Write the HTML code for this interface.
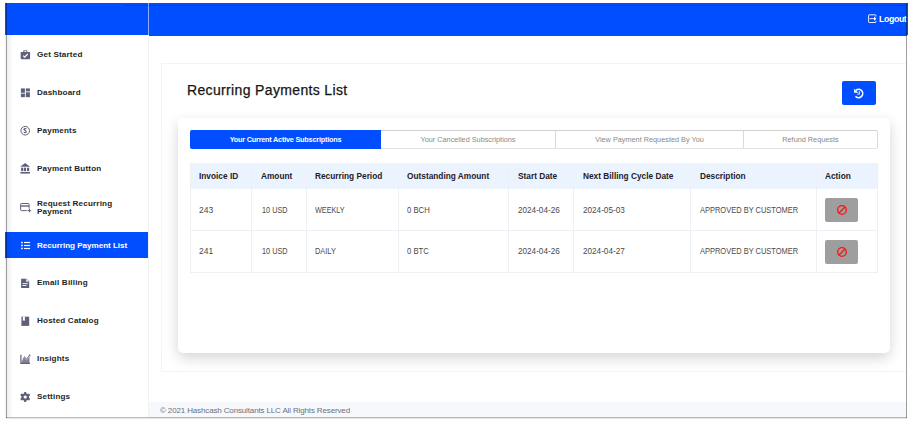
<!DOCTYPE html>
<html><head><meta charset="utf-8">
<style>
*{box-sizing:border-box;margin:0;padding:0}
html,body{width:912px;height:424px;overflow:hidden;background:#fff}
body{position:relative;font-family:"Liberation Sans",sans-serif;color:#212529}
.a{position:absolute}
.hdr{left:5px;top:3px;width:903px;height:32px;background:#004eff}
.side{left:5px;top:35px;width:144px;height:382px;background:#fff;border-right:1px solid #f1f2f4}
.foot{left:149px;top:402px;width:758px;height:16px;background:#f7f8fb}
.foot span{position:absolute;left:11px;top:3.5px;font-size:8px;letter-spacing:-0.14px;color:#6c6f80;white-space:nowrap}
.nav{left:5px;width:143px;height:26px}
.nav .ic{position:absolute;left:15px;top:8px;width:11px;height:11px}
.nav .t{position:absolute;left:32px;top:0;font-weight:bold;font-size:8.1px;letter-spacing:0.17px;white-space:nowrap;color:#1e1f24}
.panel{left:161px;top:63px;width:745px;height:309px;border:1px solid #f3f4f8;border-right:0;background:#fff}
.title{left:187px;top:81.5px;-webkit-text-stroke:0.25px #151515;font-size:14px;letter-spacing:0.35px;color:#151515;white-space:nowrap}
.rbtn{left:842px;top:81px;width:34px;height:24px;background:#004eff;border-radius:2px}
.card{left:178px;top:118px;width:712px;height:235px;background:#fff;border-radius:5px;box-shadow:0 5px 14px rgba(0,0,0,.17)}
.tabs{left:190px;top:130px;width:688px;height:19px;border:1px solid #dadada;border-top-color:#d0d0d0;border-bottom-color:#e2e2e2;border-radius:2px}
.tab{position:absolute;top:0;height:17px;font-size:7.3px;color:#8a8a8a;white-space:nowrap;line-height:17px;text-align:center}
.tbl{left:190px;top:163px;width:688px;height:110px;border:1px solid #eef0f5;border-top:0}
.th{position:absolute;top:0;height:26px;background:#ebf3fe}
.cell{position:absolute;font-size:8.5px;color:#4a4a4a;white-space:nowrap}
.hcell{position:absolute;font-size:8.3px;font-weight:bold;color:#1f2128;white-space:nowrap}
.vl{position:absolute;top:163px;width:1px;height:110px;background:#eef0f5}
.hl{position:absolute;left:190px;width:688px;height:1px;background:#eef0f5}
.ban{position:absolute;width:33px;height:24px;background:#9e9e9e;border-radius:2px}
.frame{pointer-events:none}
</style></head><body>
<div class="a hdr"></div>
<div class="a" style="left:148px;top:3px;width:1px;height:32px;background:rgba(255,255,255,.55)"></div>
<div class="a side"></div>
<div class="a" style="left:149px;top:35px;width:758px;height:1px;background:#004eff"></div>
<div class="a foot"><span>© 2021 Hashcash Consultants LLC All Rights Reserved</span></div>

<!-- nav -->
<div class="a nav" style="top:41px"><div class="t" style="top:9px">Get Started</div></div>
<div class="a nav" style="top:79px"><div class="t" style="top:9px">Dashboard</div></div>
<div class="a nav" style="top:117px"><div class="t" style="top:9px">Payments</div></div>
<div class="a nav" style="top:155px"><div class="t" style="top:9px">Payment Button</div></div>
<div class="a nav" style="top:193px"><div class="t" style="top:6.6px;line-height:8px">Request Recurring<br>Payment</div></div>
<div class="a nav" style="top:232px;background:#004eff"><div class="t" style="top:8.5px;color:#fff;letter-spacing:-0.03px">Recurring Payment List</div></div>
<div class="a nav" style="top:269px"><div class="t" style="top:9px">Email Billing</div></div>
<div class="a nav" style="top:307px"><div class="t" style="top:9px">Hosted Catalog</div></div>
<div class="a nav" style="top:345px"><div class="t" style="top:9px">Insights</div></div>
<div class="a nav" style="top:383px"><div class="t" style="top:9px">Settings</div></div>

<!-- main -->
<div class="a panel"></div>
<div class="a title">Recurring Payments List</div>
<div class="a rbtn"></div>
<div class="a card"></div>
<div class="a tabs">
  <div class="tab" style="left:-1px;top:-1px;width:191px;height:19px;line-height:19px;background:#004eff;color:#fff;font-weight:bold;letter-spacing:-0.22px;border-radius:2px 0 0 2px">Your Current Active Subscriptions</div>
  <div class="tab" style="left:190px;width:175px;border-right:1px solid #dadada">Your Cancelled Subscriptions</div>
  <div class="tab" style="left:365px;width:188px;border-right:1px solid #dadada">View Payment Requested By You</div>
  <div class="tab" style="left:553px;width:133px">Refund Requests</div>
</div>

<div class="a th" style="left:190px;top:163px;width:688px"></div>
<div class="a tbl"></div>
<div class="vl" style="left:251px"></div>
<div class="vl" style="left:306px"></div>
<div class="vl" style="left:398px"></div>
<div class="vl" style="left:508px"></div>
<div class="vl" style="left:573px"></div>
<div class="vl" style="left:690px"></div>
<div class="vl" style="left:816px"></div>
<div class="hl" style="top:230px"></div>

<div class="hcell" style="left:199px;top:171px">Invoice ID</div>
<div class="hcell" style="left:261px;top:171px">Amount</div>
<div class="hcell" style="left:315px;top:171px">Recurring Period</div>
<div class="hcell" style="left:407px;top:171px">Outstanding Amount</div>
<div class="hcell" style="left:518px;top:171px">Start Date</div>
<div class="hcell" style="left:583px;top:171px">Next Billing Cycle Date</div>
<div class="hcell" style="left:700px;top:171px">Description</div>
<div class="hcell" style="left:825px;top:171px">Action</div>

<div class="cell" style="left:199px;top:205px">243</div>
<div class="cell" style="left:262px;top:205px;transform:scaleX(0.86);transform-origin:0 0">10 USD</div>
<div class="cell" style="left:315px;top:205px;transform:scaleX(0.85);transform-origin:0 0">WEEKLY</div>
<div class="cell" style="left:407px;top:205px;transform:scaleX(0.91);transform-origin:0 0">0 BCH</div>
<div class="cell" style="left:518px;top:205px;transform:scaleX(0.96);transform-origin:0 0">2024-04-26</div>
<div class="cell" style="left:583px;top:205px;transform:scaleX(0.96);transform-origin:0 0">2024-05-03</div>
<div class="cell" style="left:700px;top:205px;transform:scaleX(0.88);transform-origin:0 0">APPROVED BY CUSTOMER</div>
<div class="ban" style="left:825px;top:198px"></div>

<div class="cell" style="left:199px;top:246px">241</div>
<div class="cell" style="left:262px;top:246px;transform:scaleX(0.86);transform-origin:0 0">10 USD</div>
<div class="cell" style="left:315px;top:246px;transform:scaleX(0.87);transform-origin:0 0">DAILY</div>
<div class="cell" style="left:407px;top:246px;transform:scaleX(0.91);transform-origin:0 0">0 BTC</div>
<div class="cell" style="left:518px;top:246px;transform:scaleX(0.96);transform-origin:0 0">2024-04-26</div>
<div class="cell" style="left:583px;top:246px;transform:scaleX(0.96);transform-origin:0 0">2024-04-27</div>
<div class="cell" style="left:700px;top:246px;transform:scaleX(0.88);transform-origin:0 0">APPROVED BY CUSTOMER</div>
<div class="ban" style="left:825px;top:240px"></div>

<!-- logout -->
<div class="a" style="left:879px;top:13.6px;font-size:8.8px;letter-spacing:-0.4px;font-weight:bold;color:#fff">Logout</div>


<!-- icons -->
<svg class="a" style="left:20px;top:49px" width="12" height="12" viewBox="0 0 12 12">
 <path d="M3.7 3.2V1.7H6.9V3.2" fill="none" stroke="#5f617c" stroke-width="0.9"/>
 <rect x="0.7" y="3" width="9.4" height="7.2" rx="0.6" fill="#5f617c"/>
 <path d="M3.2 6.7L4.6 8.1L7.7 5" fill="none" stroke="#fff" stroke-width="1.2"/>
</svg>
<svg class="a" style="left:20px;top:88px" width="12" height="12" viewBox="0 0 12 12">
 <rect x="0.9" y="0.4" width="4" height="4.4" fill="#5f617c"/>
 <rect x="0.9" y="5.6" width="4" height="3.6" fill="#5f617c"/>
 <rect x="5.8" y="0.4" width="4.1" height="3" fill="#5f617c"/>
 <rect x="5.8" y="4.3" width="4.1" height="4.9" fill="#5f617c"/>
</svg>
<svg class="a" style="left:20px;top:125px" width="12" height="12" viewBox="0 0 12 12">
 <circle cx="5.2" cy="5.7" r="4.3" fill="none" stroke="#5f617c" stroke-width="1"/>
 <path d="M6.3 4.1Q5.9 3.6 5.1 3.6Q4 3.6 4 4.5Q4 5.3 5.1 5.5Q6.3 5.8 6.3 6.7Q6.3 7.6 5.1 7.6Q4.2 7.6 3.9 7.1M5.1 2.9V3.6M5.1 7.6V8.3" fill="none" stroke="#5f617c" stroke-width="1.15"/>
</svg>
<svg class="a" style="left:20px;top:161px" width="12" height="14" viewBox="0 0 12 14">
 <path d="M0.2 5.7L5.1 2L10.1 5.7Z" fill="#5f617c"/>
 <rect x="1.1" y="6.7" width="2.2" height="3.3" fill="#5f617c"/>
 <rect x="4" y="6.7" width="2" height="3.3" fill="#5f617c"/>
 <rect x="7" y="6.7" width="2.2" height="3.3" fill="#5f617c"/>
 <rect x="0.4" y="10.9" width="9.5" height="1.7" fill="#5f617c"/>
</svg>
<svg class="a" style="left:20px;top:201px" width="13" height="13" viewBox="0 0 13 13">
 <path d="M6.8 9.6H1.4Q0.6 9.6 0.6 8.8V3.3Q0.6 2.5 1.4 2.5H8.3Q9.1 2.5 9.1 3.3V7.6" fill="none" stroke="#5f617c" stroke-width="1"/>
 <rect x="0.6" y="4.3" width="8.5" height="1.4" fill="#5f617c"/>
 <path d="M7.5 9.6H11.2M9.4 7.9V11.3" fill="none" stroke="#5f617c" stroke-width="1"/>
</svg>
<svg class="a" style="left:20px;top:240px" width="12" height="11" viewBox="0 0 12 11">
 <rect x="1.1" y="1.8" width="1.7" height="1.5" fill="#fff"/>
 <rect x="1.1" y="4.7" width="1.7" height="1.5" fill="#fff"/>
 <rect x="1.1" y="7.7" width="1.7" height="1.5" fill="#fff"/>
 <rect x="4" y="1.9" width="6.1" height="1.2" fill="#fff"/>
 <rect x="4" y="4.9" width="6.1" height="1.2" fill="#fff"/>
 <rect x="4" y="7.9" width="6.1" height="1.2" fill="#fff"/>
</svg>
<svg class="a" style="left:20px;top:277px" width="12" height="12" viewBox="0 0 12 12">
 <path d="M1.1 1.7H6.6L9.2 4.3V11.1H1.1Z" fill="#5f617c"/>
 <path d="M6.3 1.9V4.6H9" fill="#fff" stroke="#fff" stroke-width="0.3"/>
 <rect x="2.5" y="6.2" width="5.2" height="0.9" fill="#fff"/>
 <rect x="2.5" y="8.1" width="4" height="0.9" fill="#fff"/>
</svg>
<svg class="a" style="left:20px;top:315px" width="12" height="12" viewBox="0 0 12 12">
 <rect x="1.4" y="1.7" width="7.8" height="9.2" fill="#5f617c"/>
 <path d="M2.8 1.7H4.9V6.1L3.85 5.3L2.8 6.1Z" fill="#fff"/>
</svg>
<svg class="a" style="left:20px;top:353px" width="12" height="12" viewBox="0 0 12 12">
 <path d="M0.9 1.8V10.4H10" fill="none" stroke="#5f617c" stroke-width="1.2"/>
 <path d="M1.8 9.6L4.4 3.8L6.5 5.9L9.4 2.6V9.9H1.8Z" fill="#5f617c" opacity="0.5"/>
 <path d="M2.2 9.9L4.4 5.4L6.5 7.4L9.4 4.4V9.9Z" fill="#5f617c" opacity="0.6"/>
 <path d="M1.8 9.6L4.4 3.8L6.5 5.9L9.4 2.6" fill="none" stroke="#5f617c" stroke-width="0.8"/>
 <circle cx="9.6" cy="2.3" r="0.9" fill="#5f617c"/>
</svg>
<svg class="a" style="left:20px;top:391px" width="12" height="12" viewBox="-6 -6 12 12">
 <path d="M-0.9 -5.1H0.9L1.3 -3.6L2.5 -2.9L4 -3.4L4.9 -1.8L3.8 -0.7V0.7L4.9 1.8L4 3.4L2.5 2.9L1.3 3.6L0.9 5.1H-0.9L-1.3 3.6L-2.5 2.9L-4 3.4L-4.9 1.8L-3.8 0.7V-0.7L-4.9 -1.8L-4 -3.4L-2.5 -2.9L-1.3 -3.6Z" fill="#5f617c" transform="translate(-0.8 0)"/>
 <circle cx="-0.8" cy="0" r="1.6" fill="#fff"/>
</svg>
<!-- logout icon -->
<svg class="a" style="left:867.2px;top:12.8px" width="11" height="11" viewBox="0 0 11 11">
 <path d="M8.9 3.5V2.4Q8.9 1.8 8.3 1.8H2.2Q1.6 1.8 1.6 2.4V8.9Q1.6 9.5 2.2 9.5H8.3Q8.9 9.5 8.9 8.9V7.9" fill="none" stroke="#fff" stroke-width="0.9"/>
 <path d="M2.6 5.65H8.2" fill="none" stroke="#fff" stroke-width="0.9"/><path d="M7 3.6L9.5 5.65L7 7.7Z" fill="#fff"/>
</svg>
<!-- refresh icon -->
<svg class="a" style="left:850px;top:85px" width="18" height="16" viewBox="0 0 18 16">
 <path d="M5.97 5.36A4.1 4.1 0 1 1 5.51 11.19" fill="none" stroke="#fff" stroke-width="1.6"/>
 <path d="M4 3.7L4 7.8L8.3 7.8Z" fill="#fff"/>
 <path d="M9.3 6.1V9.2H7.4" fill="none" stroke="#fff" stroke-width="1"/>
</svg>
<svg class="a" style="left:836px;top:204px" width="12" height="12" viewBox="-6 -6 12 12"><circle r="4.3" fill="none" stroke="#ff1111" stroke-width="1.3"/><path d="M3 -3L-3 3" stroke="#ff1111" stroke-width="1.3"/></svg><svg class="a" style="left:836px;top:246px" width="12" height="12" viewBox="-6 -6 12 12"><circle r="4.3" fill="none" stroke="#ff1111" stroke-width="1.3"/><path d="M3 -3L-3 3" stroke="#ff1111" stroke-width="1.3"/></svg>
<!-- frame -->
<div class="a frame" style="left:6px;top:3px;width:1px;height:415px;background:rgba(0,0,0,.38)"></div><div class="a frame" style="left:5px;top:36px;width:1px;height:382px;background:rgba(0,0,0,.06)"></div>
<div class="a frame" style="left:7px;top:35px;width:6px;height:382px;background:linear-gradient(90deg,rgba(0,0,0,.07),rgba(0,0,0,0))"></div>
<div class="a frame" style="left:906px;top:3px;width:1px;height:415px;background:rgba(0,0,0,.38)"></div>
<div class="a frame" style="left:6px;top:417px;width:901px;height:1px;background:rgba(0,0,0,.26)"></div><div class="a frame" style="left:6px;top:418px;width:901px;height:1px;background:rgba(0,0,0,.1)"></div>
<div class="a frame" style="left:124px;top:5px;width:782px;height:1px;background:rgba(0,0,0,.2)"></div>
</body></html>
